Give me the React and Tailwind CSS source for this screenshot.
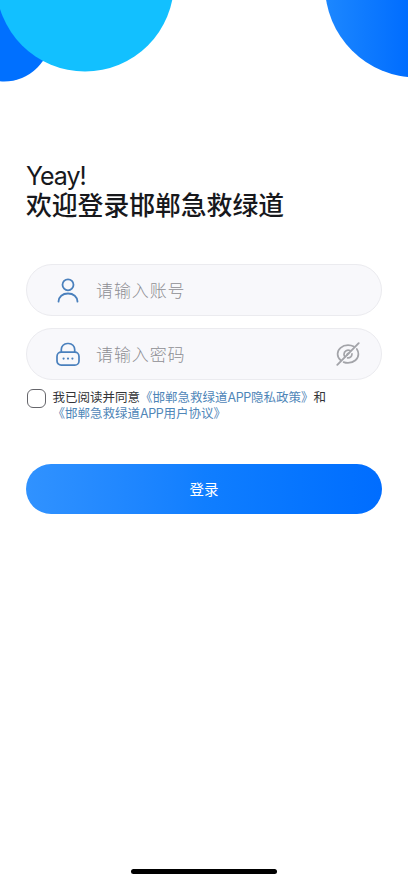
import React, {useState} from "react";

const UserIcon = () => (
    <svg width="24" height="26" viewBox="0 0 24 26" fill="none" stroke="#4a80bd" strokeWidth="1.8" strokeLinecap="round">
        <circle cx="12" cy="7.8" r="5.5"/>
        <path d="M2.5 24.6C2.7 19.800 6.500 16.500 12 16.500s9.300 3.300 9.500 8.100"/>
    </svg>
)

const LockIcon = () => (
    <svg width="24" height="26" viewBox="0 0 24 26" fill="none" stroke="#4a80bd" strokeWidth="1.7">
        <rect x="1" y="11.2" width="22" height="13" rx="4.2"/>
        <path d="M5.300 11.200V8.500a6 6 0 0 1 6-6h1.400a6 6 0 0 1 6 6v2.700"/>
        <g fill="#4a80bd" stroke="none">
            <circle cx="7.600" cy="17.600" r="1.100"/>
            <circle cx="12" cy="17.600" r="1.100"/>
            <circle cx="16.400" cy="17.600" r="1.100"/>
        </g>
    </svg>
)

const EyeOffIcon = () => (
    <svg width="24" height="24" viewBox="0 0 24 24" fill="none" stroke="#a3a4a9" strokeWidth="1.7" strokeLinecap="round">
        <path d="M17.800 4.600C16.200 3.700 14.200 3.200 12 3.200 6 3.200 1.600 7.300 1.600 12c0 2.500 1.100 4.700 3.100 6.200"/>
        <path d="M20.800 7c1 1.500 1.600 3.200 1.600 5 0 4.800-4.400 8.900-10.400 8.900-1.600 0-3.100-.3-4.400-.8"/>
        <path d="M14 8.600C11.500 7.200 8 9 8 12.200c0 1 .3 1.900.9 2.600"/>
        <path d="M16 11.800c0 2.600-1.800 4.200-4.400 4"/>
        <path d="M12.600 11.400c-1 0-1.500.7-1.300 1.500"/>
        <path d="M1.300 22.800 22.700 1.200" strokeWidth="1.900"/>
    </svg>
)

const Circles = () => (
    <svg className={'block w-full h-[90px]'} viewBox="0 0 408 90">
        <defs>
            <linearGradient id="circle" gradientUnits="userSpaceOnUse" x1="326" y1="0" x2="408" y2="0">
                <stop offset="0" stopColor="#1c87ff"/>
                <stop offset="1" stopColor="#006dff"/>
            </linearGradient>
        </defs>
        <circle cx="4" cy="34.500" r="47" fill="#0070ff"/>
        <circle cx="85" cy="-17.500" r="89" fill="#12c0ff"/>
        <circle cx="417" cy="-14.500" r="92" fill="url(#circle)"/>
    </svg>
)

export default function App() {

    const [agree, setAgree] = useState(false);
    const [showPassword, setShowPassword] = useState(false);

    return (
        <div className={'w-full h-[883px] flex flex-col bg-white overflow-hidden font-["Inter","Noto_Sans_CJK_SC",sans-serif]'}>
            <Circles/>

            <h1 className={'mt-[72px] ml-[26px] leading-[29px] font-medium text-[#17181c] whitespace-nowrap'}>
                <div className={'text-[25px] font-normal tracking-[-1px]'}>Yeay!</div>
                <div className={'text-[25.8px]'}>欢迎登录邯郸急救绿道</div>
            </h1>

            <form className={'mt-[44px] mx-[26px] flex flex-col'}>
                <label className={'h-[52px] rounded-full bg-[#f8f8fb] border border-[#ebebef] flex items-center pl-[29px] pr-[21px]'}>
                    <UserIcon/>
                    <input
                        type="text"
                        placeholder="请输入账号"
                        className="ml-4 pt-[3px] flex-1 min-w-0 bg-transparent outline-none text-[17px] font-light tracking-[0.9px] placeholder:text-[#8e8e93]"
                    />
                </label>
                <label className={'mt-3 h-[52px] rounded-full bg-[#f8f8fb] border border-[#ebebef] flex items-center pl-[29px] pr-[21px]'}>
                    <LockIcon/>
                    <input
                        type={showPassword ? "text" : "password"}
                        placeholder="请输入密码"
                        className="ml-4 pt-[3px] flex-1 min-w-0 bg-transparent outline-none text-[17px] font-light tracking-[0.9px] placeholder:text-[#8e8e93]"
                    />
                    <button type="button" onClick={() => setShowPassword(!showPassword)}><EyeOffIcon/></button>
                </label>

                <div className={'mt-[10px] flex items-start'}>
                    <input
                        type="checkbox"
                        checked={agree}
                        onChange={() => setAgree(!agree)}
                        className="appearance-none shrink-0 -mt-px ml-px w-[19px] h-[19px] rounded-[6px] border border-[#65656a] bg-white checked:bg-[#0070ff]"
                    />
                    <p className={'ml-[6.5px] text-[12.5px] leading-4 text-[#333437] whitespace-nowrap'}>
                        我已阅读并同意<a className={'text-[#4f86b8]'}>《邯郸急救绿道<span className={'tracking-[-0.4px]'}>APP</span>隐私政策》</a>和
                        <br/>
                        <a className={'text-[#4f86b8]'}>《邯郸急救绿道<span className={'tracking-[-0.4px]'}>APP</span>用户协议》</a>
                    </p>
                </div>

                <button
                    type="button"
                    className="mt-[42px] pt-[2px] h-[50px] rounded-full bg-linear-to-r from-[#3092ff] via-[#107eff] to-[#006dff] text-white text-[14.500px]"
                >
                    登录
                </button>
            </form>

            <div className={'mt-auto mb-[9px] mx-auto w-[146px] h-[5px] rounded-full bg-black'}/>
        </div>
    )
}
